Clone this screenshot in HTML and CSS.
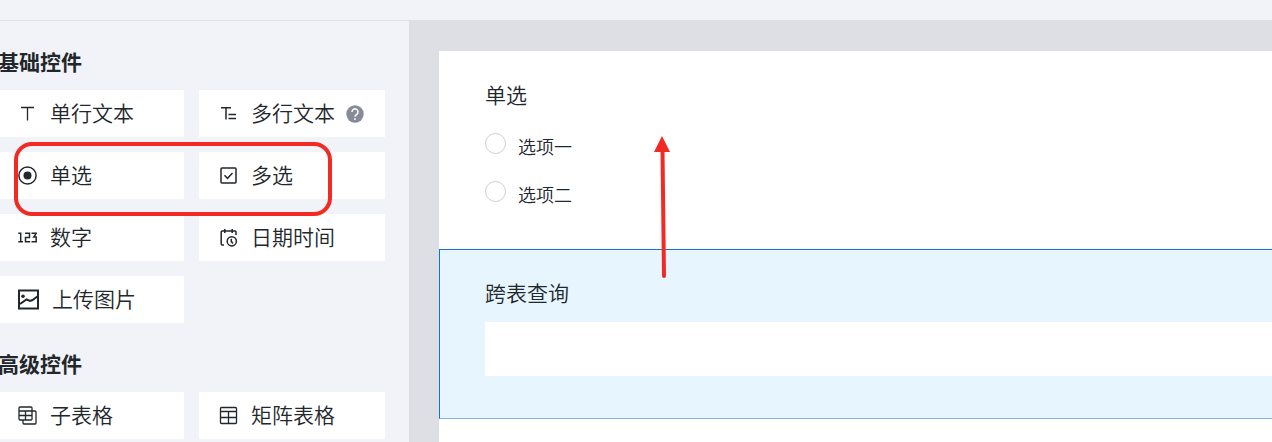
FILE: index.html
```html
<!DOCTYPE html>
<html lang="zh-CN">
<head>
    <meta charset="UTF-8">
    <meta name="viewport" content="width=device-width, initial-scale=1.0">
    <title>表单设计</title>
    <link rel="stylesheet" href="styles.css">
</head>
<body>
    <header class="topbar"></header>
    <div class="designer">
        <aside class="panel">
            <h2 class="panel-title">基础控件</h2>
            <div class="controls">
                <button type="button" class="control">
                    <svg class="icon thin" viewBox="0 0 19 19"><path d="M3 3.500h13M9.500 3.500v13"/></svg>
                    <span>单行文本</span>
                </button>
                <button type="button" class="control">
                    <svg class="icon" viewBox="0 0 19 19"><path d="M2 3.800h10M7 3.800v11.700M9.500 10.500H17M9.500 14.500H17"/></svg>
                    <span>多行文本</span>
                    <svg class="help" viewBox="0 0 18 18"><circle cx="9" cy="9" r="8.700"/><path d="M6 7a3 3 0 1 1 4.800 2.300C9.600 10.200 9 10.600 9 11.800M9 13.300v1.700"/></svg>
                </button>
                <button type="button" class="control">
                    <svg class="icon" viewBox="0 0 19 19"><circle cx="9.500" cy="9.500" r="8.600"/><circle class="solid" cx="9.500" cy="9.500" r="4"/></svg>
                    <span>单选</span>
                </button>
                <button type="button" class="control">
                    <svg class="icon" viewBox="0 0 19 19"><rect x="2" y="2" width="15" height="15" rx="1"/><path d="M5.500 9.300l3 3 5-5.300"/></svg>
                    <span>多选</span>
                </button>
                <button type="button" class="control">
                    <svg class="icon" viewBox="0 0 19 19"><path d="M.3 5.300h2.400v8.500M.3 13.800h4.700M7 5.300h4.500v4.200H7.500v4.300h4.700M13.500 5.300h4.700l-2.500 3.700h2.500v4.800h-4.700"/></svg>
                    <span>数字</span>
                </button>
                <button type="button" class="control">
                    <svg class="icon" viewBox="0 0 19 19"><path d="M5 17H3.200a1 1 0 0 1-1-1V4a1 1 0 0 1 1-1H16a1 1 0 0 1 1 1v3M5.800 1v4M13.200 1v4"/><circle cx="12.800" cy="13.300" r="4.600"/><path d="M12.300 10.800v2.800l1.700 1.900"/></svg>
                    <span>日期时间</span>
                </button>
                <button type="button" class="control">
                    <svg class="icon icon-image" viewBox="0 0 21 21"><rect x="1" y="1.500" width="19" height="18"/><circle class="solid" cx="5" cy="7.200" r="1.800"/><path d="M2 15l6.500-4.500 3.500 1.500 2.500-1L20 7"/></svg>
                    <span>上传图片</span>
                </button>
            </div>
            <h2 class="panel-title">高级控件</h2>
            <div class="controls">
                <button type="button" class="control">
                    <svg class="icon thin" viewBox="0 0 19 19"><rect x="1" y="1" width="13" height="13" rx="1"/><path d="M1 5h13M1 9.500h13M7.500 5v9M14 5h3a1 1 0 0 1 1 1v11a1 1 0 0 1-1 1H6a1 1 0 0 1-1-1v-3"/></svg>
                    <span>子表格</span>
                </button>
                <button type="button" class="control">
                    <svg class="icon thin" viewBox="0 0 19 19"><rect x="1.500" y="1.500" width="16" height="16" rx="1"/><path d="M1.500 5.500h16M1.500 11.500h16M9.500 5.500v12"/></svg>
                    <span>矩阵表格</span>
                </button>
            </div>
        </aside>
        <main class="canvas">
            <div class="form">
                <fieldset class="field">
                    <legend class="field-label">单选</legend>
                    <div class="options">
                        <label class="option"><input type="radio" name="choice">选项一</label>
                        <label class="option"><input type="radio" name="choice">选项二</label>
                    </div>
                </fieldset>
                <div class="field field-active">
                    <label class="field-label" for="lookup">跨表查询</label>
                    <input type="text" id="lookup" class="field-input">
                </div>
            </div>
        </main>
    </div>
    <!-- Annotations drawn over the designer -->
    <div class="mark-box"></div>
    <svg class="mark-arrow" viewBox="0 0 20 144"><path class="shaft" d="M8.500 14L10 140"/><path class="head" d="M8 0l8 16H0z"/></svg>
</body>
</html>
```
FILE: styles.css
```css
* {
    box-sizing: border-box;
}
body {
    position: relative;
    display: flex;
    flex-direction: column;
    height: 100vh;
    margin: 0;
    overflow: hidden;
    background-color: #f2f3f8;
    color: #22272b;
    font-family: "Noto Sans CJK SC", sans-serif;
    font-size: 21px;
    font-weight: 350;
    line-height: 30px;
}
button,
input {
    font: inherit;
    color: inherit;
}
.topbar {
    flex: none;
    height: 20px;
}
.designer {
    display: flex;
    flex: 1;
    min-height: 0;
}
.panel {
    flex: none;
    width: 409px;
    padding-right: 24px;
    border-top: 1px solid #dedfe4;
}
.panel-title {
    margin: 25px 0 14px -2px;
    font-size: 21px;
    font-weight: 700;
    line-height: 30px;
}
.controls {
    display: grid;
    grid-template-columns: 1fr 1fr;
    gap: 15px;
    margin-left: -2px;
}
.control {
    display: flex;
    align-items: center;
    gap: 13px;
    height: 47px;
    padding: 0 20px;
    border: none;
    background-color: #fff;
    white-space: nowrap;
    cursor: pointer;
}
.control span {
    padding-bottom: 4px;
}
.icon {
    flex: none;
    width: 19px;
    height: 19px;
    fill: none;
    stroke: #22272b;
    stroke-width: 1.5;
}
.icon-image {
    width: 21px;
    height: 21px;
    stroke-width: 2;
}
.thin {
    stroke-width: 1.3;
}
.solid {
    fill: #22272b;
    stroke: none;
}
.help {
    flex: none;
    width: 18px;
    height: 18px;
    margin-left: -2px;
    fill: none;
    stroke: #fff;
    stroke-width: 1.5;
}
.help circle {
    fill: #868b97;
    stroke: none;
}
.canvas {
    flex: 1;
    min-width: 0;
    padding: 31px 0 0 30px;
    background-color: #dedfe4;
}
.form {
    height: 100%;
    background-color: #fff;
}
.field {
    margin: 0;
    padding: 28px 0 41px 46px;
    border: none;
}
.field-label {
    display: block;
    float: left;
    width: 100%;
    padding: 0;
}
.options {
    display: flex;
    flex-direction: column;
    clear: both;
    gap: 21px;
    padding-top: 24px;
}
.option {
    display: flex;
    align-items: flex-start;
    gap: 12px;
    font-size: 18px;
    line-height: 27px;
}
.option input {
    appearance: none;
    width: 21px;
    height: 21px;
    margin: 0;
    border: 1px solid #cdced9;
    border-radius: 50%;
    background-color: #fff;
}
.field-active {
    padding: 27px 0 42px 45px;
    border: solid #1a6fd4;
    border-width: 1px 0 1px 1px;
    border-bottom-color: #85b2ea;
    background-color: #e7f5ff;
}
.field-active .field-label {
    float: none;
}
.field-input {
    display: block;
    width: 100%;
    height: 54px;
    margin-top: 15px;
    padding: 0 15px;
    border: none;
    background-color: #fff;
}
.mark-box {
    position: absolute;
    top: 142px;
    left: 14px;
    width: 318px;
    height: 74px;
    border: 4px solid #f32a24;
    border-radius: 18px;
    pointer-events: none;
}
.mark-arrow {
    position: absolute;
    top: 136px;
    left: 654px;
    width: 20px;
    height: 144px;
    pointer-events: none;
}
.shaft {
    fill: none;
    stroke: #f32a24;
    stroke-width: 4;
    stroke-linecap: round;
}
.head {
    fill: #f32a24;
}
```
